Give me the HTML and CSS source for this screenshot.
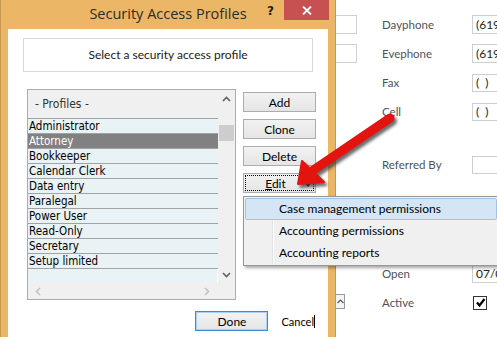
FILE: index.html
```html
<html>
    <head>
        <title>Security Access Profiles</title>
        <link rel="stylesheet" href="styles.css">
    </head>
    <body>
        <div class="screen">
            <div class="dialog">
                <div class="titlebar">
                    <span></span>
                    <span class="title">Security Access Profiles</span>
                    <div class="caption-buttons">
                        <span class="help">?</span>
                        <span class="close">
                            <svg width="10" height="9" viewBox="0 0 10 9"><path d="M1 0.5 L9 8.5 M9 0.5 L1 8.5" stroke="#fff" stroke-width="1.8" fill="none"/></svg>
                        </span>
                    </div>
                </div>
                <div class="client">
                    <div class="prompt">Select a security access profile</div>
                    <div class="main-row">
                        <div class="listbox">
                            <div class="list-area">
                                <div class="list-col">
                                    <div class="list-head">- Profiles -</div>
                                    <div class="item">Administrator</div>
                                    <div class="item selected">Attorney</div>
                                    <div class="item">Bookkeeper</div>
                                    <div class="item">Calendar Clerk</div>
                                    <div class="item">Data entry</div>
                                    <div class="item">Paralegal</div>
                                    <div class="item">Power User</div>
                                    <div class="item">Read-Only</div>
                                    <div class="item">Secretary</div>
                                    <div class="item last">Setup limited</div>
                                    <div class="list-empty"></div>
                                </div>
                                <div class="vscroll">
                                    <svg class="chev up" width="9" height="6" viewBox="0 0 9 6"><path d="M1 5 L4.5 1.5 L8 5" stroke="#606060" stroke-width="1.6" fill="none"/></svg>
                                    <span class="thumb"></span>
                                    <svg class="chev down" width="9" height="6" viewBox="0 0 9 6"><path d="M1 1 L4.5 4.5 L8 1" stroke="#606060" stroke-width="1.6" fill="none"/></svg>
                                </div>
                            </div>
                            <div class="hscroll">
                                <div class="hscroll-track">
                                    <svg width="6" height="9" viewBox="0 0 6 9"><path d="M5 1 L1.5 4.5 L5 8" stroke="#c2c2c2" stroke-width="1.6" fill="none"/></svg>
                                    <svg width="6" height="9" viewBox="0 0 6 9"><path d="M1 1 L4.5 4.5 L1 8" stroke="#c2c2c2" stroke-width="1.6" fill="none"/></svg>
                                </div>
                            </div>
                        </div>
                        <div class="btn-col">
                            <button class="btn">Add</button>
                            <button class="btn">Clone</button>
                            <button class="btn">Delete</button>
                            <button class="btn focused"><span><u>E</u>dit</span><span class="caret"></span></button>
                        </div>
                    </div>
                    <div class="footer">
                        <button class="btn default">Done</button>
                        <button class="btn flat">Cancel<span class="cursor"></span></button>
                    </div>
                </div>
            </div>
            <div class="app">
                <div class="app-row">
                    <span class="stub"></span>
                    <span class="label">Dayphone</span>
                    <span class="field">(619</span>
                </div>
                <div class="app-row">
                    <span class="stub"></span>
                    <span class="label">Evephone</span>
                    <span class="field">(619</span>
                </div>
                <div class="app-row">
                    <span class="stub blank"></span>
                    <span class="label">Fax</span>
                    <span class="field short">(&nbsp;&nbsp;)</span>
                </div>
                <div class="app-row">
                    <span class="stub blank"></span>
                    <span class="label">Cell</span>
                    <span class="field short">(&nbsp;&nbsp;)</span>
                </div>
                <div class="app-row referred">
                    <span class="stub blank"></span>
                    <span class="label">Referred By</span>
                    <span class="field short"></span>
                </div>
                <div class="app-row open">
                    <span class="stub blank"></span>
                    <span class="label">Open</span>
                    <span class="field">07/0</span>
                </div>
                <div class="app-row">
                    <span class="stub blank">
                        <span class="spin">
                            <svg width="7" height="5" viewBox="0 0 7 5"><path d="M0.5 4 L3.5 1 L6.5 4" stroke="#555" stroke-width="1.2" fill="none"/></svg>
                        </span>
                    </span>
                    <span class="label">Active</span>
                    <span class="check">
                        <svg width="11" height="11" viewBox="0 0 11 11"><path d="M2 5.5 L4.5 8.5 L9.5 2" stroke="#000" stroke-width="2.2" fill="none"/></svg>
                    </span>
                </div>
            </div>
        </div>

        <div class="menu">
            <div class="menu-item hot">Case management permissions</div>
            <div class="menu-item">Accounting permissions</div>
            <div class="menu-item">Accounting reports</div>
        </div>

        <svg class="pointer" width="497" height="337" viewBox="0 0 497 337">
            <defs>
                <filter id="soft" x="-20%" y="-20%" width="140%" height="140%">
                    <feGaussianBlur stdDeviation="1.6"/>
                </filter>
            </defs>
            <g transform="translate(2.5 3)" fill="#3a3a3a" stroke="#3a3a3a" filter="url(#soft)" opacity="0.75">
                <line x1="312" y1="171" x2="390" y2="118" stroke-width="9" stroke-linecap="round"/>
                <polygon points="298,184 302,161 324,182" stroke-width="2" stroke-linejoin="round"/>
            </g>
            <g>
                <line x1="312" y1="171" x2="390" y2="118" stroke="#e3140f" stroke-width="9" stroke-linecap="round"/>
                <polygon points="298,184 302,161 324,182" fill="#e3140f" stroke="#e3140f" stroke-width="2" stroke-linejoin="round"/>
            </g>
        </svg>
    </body>
</html>
```

FILE: styles.css
```css
body {
    margin: 0;
    width: 497px;
    height: 337px;
    overflow: hidden;
    background: #ffffff;
    font-family: Lato, "Open Sans", sans-serif;
    position: relative;
}

.screen {
    display: flex;
    width: 497px;
    height: 337px;
    overflow: hidden;
}

/* dialog window */

.dialog {
    width: 320px;
    flex: none;
    display: flex;
    flex-direction: column;
    background: #ebb665;
    border-left: 1px solid #c6974f;
    border-right: 1px solid #c6974f;
    padding: 0 7px;
}

.titlebar {
    height: 29px;
    display: grid;
    grid-template-columns: 1fr auto 1fr;
    align-items: start;
}

.title {
    font-family: "Open Sans", sans-serif;
    font-size: 14.5px;
    color: #2b2b2b;
    padding-top: 4px;
    white-space: nowrap;
}

.caption-buttons {
    display: flex;
    justify-content: flex-end;
    align-items: flex-start;
    margin-right: -1px;
}

.help {
    font-family: "DejaVu Sans", sans-serif;
    font-weight: bold;
    font-size: 12px;
    color: #1f1f1f;
    margin-top: 4px;
    margin-right: 10px;
}

.close {
    width: 45px;
    height: 20px;
    background: #c75050;
    display: flex;
    align-items: center;
    justify-content: center;
}

.client {
    flex: 1;
    background: #ffffff;
    padding: 9px 15px 0 15px;
}

.prompt {
    height: 32px;
    border: 1px solid #d9d9d9;
    text-align: center;
    line-height: 32px;
    font-size: 12px;
    color: #1a1a1a;
}

.main-row {
    display: flex;
    column-gap: 7px;
    margin-top: 17px;
    padding-left: 4px;
}

/* profile list */

.listbox {
    width: 207px;
    border: 1px solid #acacac;
    background: #f0f0f0;
    display: flex;
    flex-direction: column;
}

.list-area {
    display: flex;
}

.list-col {
    width: 190px;
    display: flex;
    flex-direction: column;
    font-family: "DejaVu Sans Condensed", "Liberation Sans", sans-serif;
    font-size: 11.5px;
}

.list-head {
    height: 28px;
    line-height: 28px;
    padding-left: 7px;
    color: #333;
    font-size: 12px;
}

.item {
    height: 14px;
    line-height: 14px;
    border-top: 1px solid #a2a2a2;
    background: #e9f2f5;
    padding-left: 1px;
    color: #000;
    white-space: nowrap;
}

.item.selected {
    background: #818181;
    color: #ffffff;
}

.item.last {
    border-bottom: 1px solid #a2a2a2;
}

.list-empty {
    height: 14px;
    background: #e9f2f5;
    border-right: 1px solid #ffffff;
}

.vscroll {
    width: 17px;
    display: flex;
    flex-direction: column;
    align-items: center;
}

.chev.up {
    margin-top: 6px;
}

.thumb {
    width: 15px;
    height: 16px;
    margin-top: 23px;
    background: #cdcdcd;
}

.chev.down {
    margin-top: auto;
    margin-bottom: 5px;
}

.hscroll {
    height: 16px;
    display: flex;
}

.hscroll-track {
    width: 190px;
    display: flex;
    align-items: center;
    justify-content: space-between;
    padding: 0 8px 0 7px;
    box-sizing: border-box;
}

/* buttons */

.btn-col {
    display: flex;
    flex-direction: column;
    row-gap: 7px;
    margin-top: 3px;
}

.btn {
    width: 73px;
    height: 20px;
    padding: 0;
    border: 1px solid #acacac;
    background: linear-gradient(#f2f2f2, #e5e5e5);
    font-family: Lato, "Open Sans", sans-serif;
    font-size: 12px;
    color: #000;
}

.btn.focused {
    display: flex;
    align-items: center;
    justify-content: center;
    position: relative;
    outline: 1px dotted #000;
    outline-offset: -3px;
    padding-right: 8px;
}

.caret {
    position: absolute;
    right: 4px;
    top: 9px;
    border-left: 3.5px solid transparent;
    border-right: 3.5px solid transparent;
    border-top: 4px solid #000;
}

.footer {
    display: flex;
    justify-content: flex-end;
    align-items: center;
    column-gap: 13px;
    margin-top: 11px;
    margin-right: -2px;
}

.btn.default {
    border-color: #3c8ae0;
    box-shadow: inset 0 0 0 1px #a9d0f5;
}

.btn.flat {
    width: auto;
    border: none;
    background: none;
    display: flex;
    align-items: center;
    font-size: 11px;
}

.cursor {
    width: 1px;
    height: 13px;
    margin-left: 0;
    background: #000;
}

/* background application */

.app {
    flex: 1;
    overflow: hidden;
    padding-top: 10px;
    font-family: Lato, "Open Sans", sans-serif;
}

.app-row {
    height: 29px;
    display: flex;
    align-items: center;
}

.stub {
    width: 20px;
    height: 17px;
    flex: none;
    border: 1px solid #d0d0d0;
    border-left: none;
}

.stub.blank {
    border: none;
    width: 21px;
    position: relative;
}

.label {
    width: 90px;
    flex: none;
    margin-left: 25px;
    font-size: 11.5px;
    color: #4e5260;
}

.field {
    width: 60px;
    height: 19px;
    flex: none;
    box-sizing: border-box;
    border: 1px solid #cfcfcf;
    font-size: 12px;
    line-height: 17px;
    padding-left: 3px;
    color: #222;
}

.field.short {
    height: 18px;
    line-height: 16px;
}

.referred {
    margin-top: 24px;
}

.open {
    margin-top: 80px;
}

.spin {
    display: flex;
    align-items: center;
    justify-content: center;
    width: 8px;
    height: 13px;
    border: 1px solid #9a9a9a;
    border-left: none;
    background: #f4f4f4;
}

.check {
    width: 12px;
    height: 12px;
    margin-left: 1px;
    border: 1px solid #333;
    display: flex;
    align-items: center;
    justify-content: center;
}

/* dropdown menu */

.menu {
    position: absolute;
    left: 243px;
    top: 196px;
    width: 252px;
    padding: 1px;
    border: 1px solid #979797;
    background: linear-gradient(to right, transparent 28px, #e2e3e3 28px, #e2e3e3 29px, #ffffff 29px, #ffffff 30px, transparent 30px), #f0f0f0;
    box-shadow: 2px 2px 3px rgba(0, 0, 0, 0.35);
    display: flex;
    flex-direction: column;
}

.menu-item {
    height: 20px;
    line-height: 20px;
    padding-left: 33px;
    font-size: 12px;
    color: #000;
    border: 1px solid transparent;
    white-space: nowrap;
}

.menu-item.hot {
    background: #d4e5f6;
    border-color: #a3c3e6;
    border-radius: 2px;
}

.pointer {
    position: absolute;
    left: 0;
    top: 0;
    pointer-events: none;
}
```
